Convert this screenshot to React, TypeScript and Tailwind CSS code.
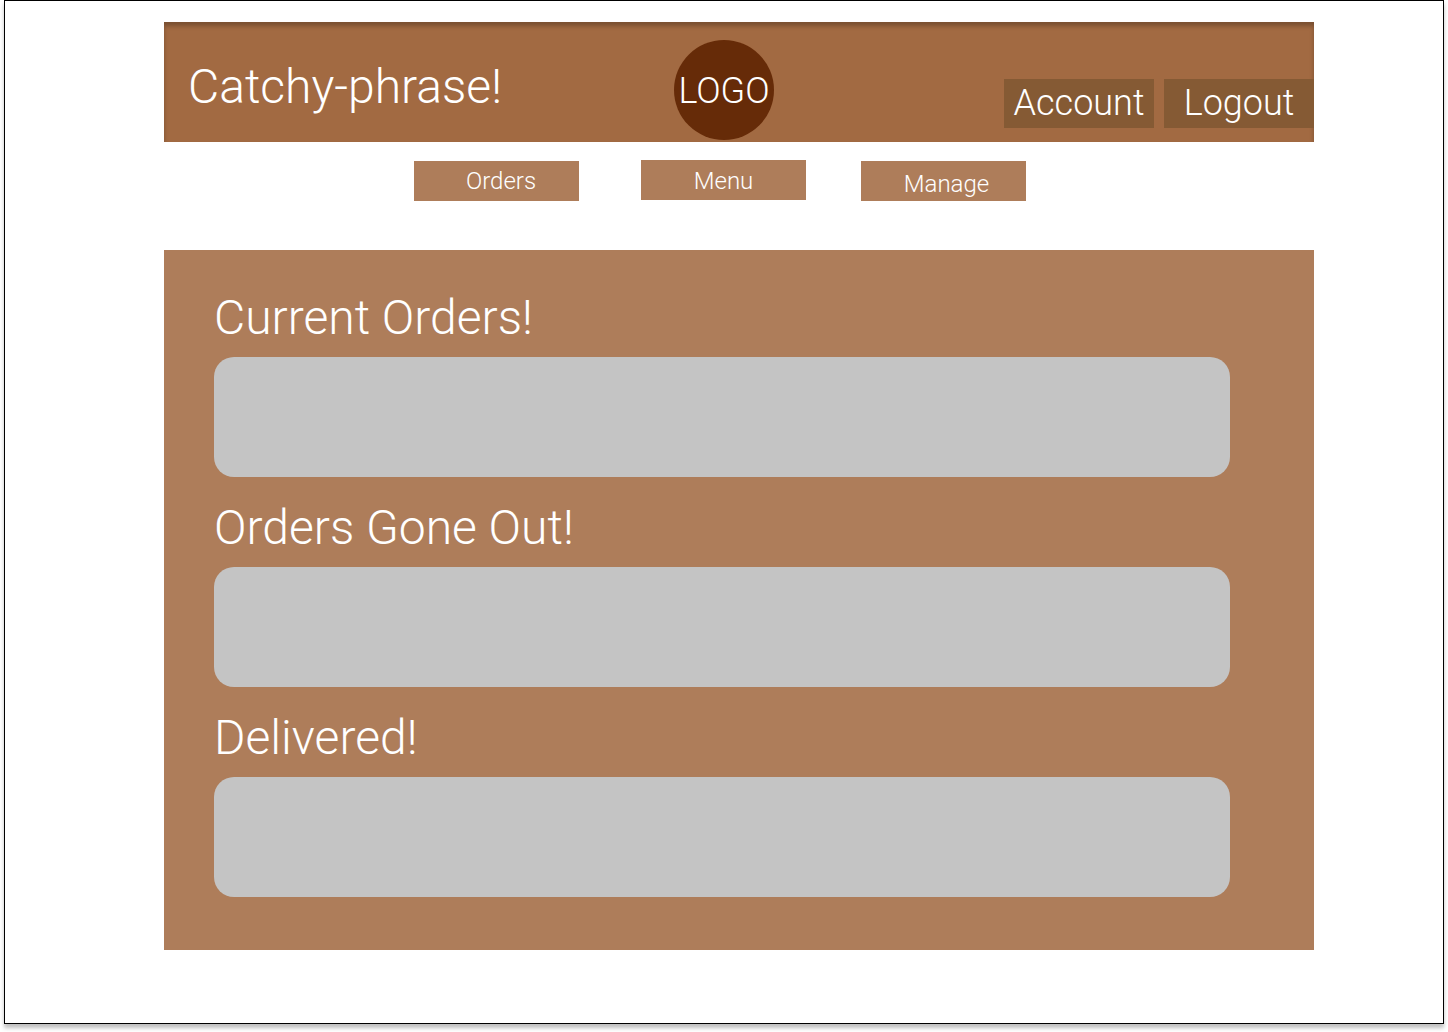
const sections = ["Current Orders!", "Orders Gone Out!", "Delivered!"];

function NavButton({ label, className }: { label: string; className: string }) {
  return (
    <div className={`flex h-10 w-[165px] items-center justify-center bg-[#ae7d5a] text-2xl font-light text-white ${className}`}>
      {label}
    </div>
  );
}

export default function App() {
  return (
    <div className="min-h-[1032px] bg-white font-['Roboto',sans-serif]">
      <div className="ml-1 h-[1024px] w-[1440px] border border-black bg-white pl-[159px] pt-[21px] shadow-[0_4px_4px_rgba(0,0,0,0.25)]">
        <header className="flex h-[120px] w-[1150px] bg-[#a26a42] pl-[24px] shadow-[inset_0_4px_4px_rgba(0,0,0,0.25)]">
          <h1 className="mt-[37px] w-[486px] text-5xl leading-[56px] font-light text-white">Catchy-phrase!</h1>
          <div className="mt-[18px] flex h-[100px] w-[100px] items-center justify-center rounded-full bg-[#662b08] pt-0.5 text-4xl font-light text-white">
            LOGO
          </div>
          <div className="mt-[57px] ml-auto flex h-[49px] gap-2.5">
            <div className="flex w-[150px] items-center justify-center bg-[#855a34] pb-0.5 text-4xl font-light text-white">Account</div>
            <div className="flex w-[150px] items-center justify-center bg-[#855a34] pb-0.5 text-4xl font-light text-white">Logout</div>
          </div>
        </header>

        <nav className="flex h-[108px] items-start pl-[250px]">
          <NavButton label="Orders" className="mt-[19px] pl-[9px]" />
          <NavButton label="Menu" className="mt-[18px] ml-[62px] pt-0.5" />
          <NavButton label="Manage" className="mt-[19px] ml-[55px] pt-1.5 pl-1.5" />
        </nav>

        <main className="h-[700px] w-[1150px] bg-[#ae7d5a] pt-[39px] pl-[50px]">
          {sections.map((title) => (
            <section key={title} className="mb-[22px]">
              <h2 className="h-[68px] pt-px text-5xl leading-[56px] font-light text-white">{title}</h2>
              <div className="h-[120px] w-[1016px] rounded-[20px] bg-[#c4c4c4]" />
            </section>
          ))}
        </main>
      </div>
    </div>
  );
}
